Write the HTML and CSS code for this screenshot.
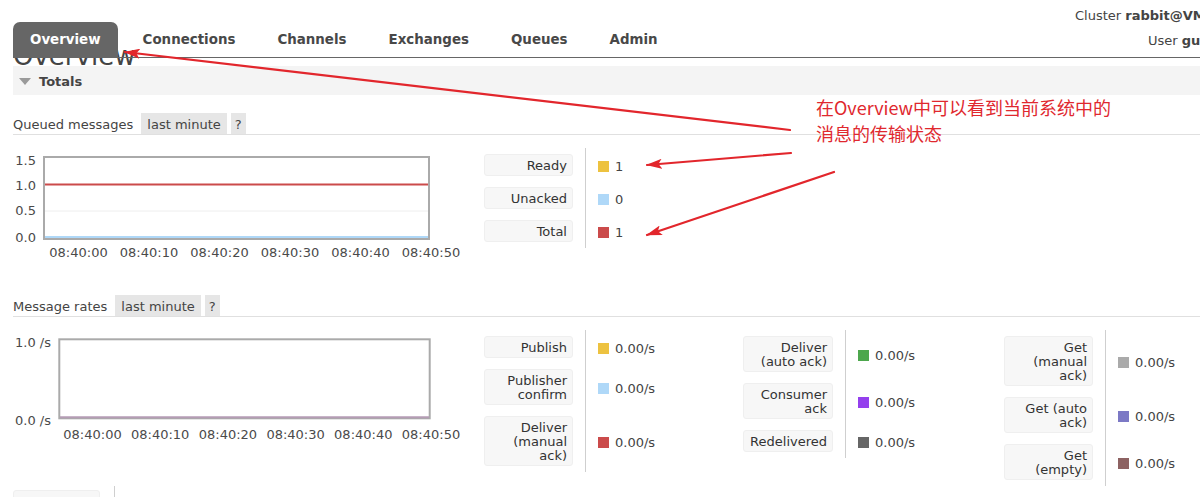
FILE: index.html
```html
<!DOCTYPE html>
<html lang="en">
<head>
<meta charset="utf-8">
<title>RabbitMQ Management - Overview</title>
<link rel="stylesheet" href="styles.css">
</head>
<body>
<header class="topbar">
  <ul class="tabs">
    <li class="tab tab-active">Overview</li>
    <li class="tab">Connections</li>
    <li class="tab">Channels</li>
    <li class="tab">Exchanges</li>
    <li class="tab">Queues</li>
    <li class="tab">Admin</li>
  </ul>
  <div class="login">
    <div class="login-line">Cluster <b>rabbit@VM_0_9_centos</b></div>
    <div class="login-line login-user">User <b>guest</b></div>
  </div>
</header>

<div class="title-clip"><h1 class="page-title">Overview</h1></div>

<div class="section-bar"><span class="caret"></span><span>Totals</span></div>

<main class="content">
  <div class="heading-row">
    <h3>Queued messages</h3>
    <span class="pill">last minute</span>
    <span class="pill pill-help">?</span>
  </div>

  <div class="chart-row">
    <svg class="chart" width="455" height="112" viewBox="0 0 455 112">
      <rect x="31" y="9" width="385" height="82" fill="#fff" stroke="#aaa" stroke-width="2"/>
      <line x1="32" y1="63" x2="415" y2="63" stroke="#eee" stroke-width="1"/>
      <line x1="32" y1="36.5" x2="415" y2="36.5" stroke="#cb4b4b" stroke-width="2"/>
      <line x1="32" y1="89" x2="415" y2="89" stroke="#afd8f8" stroke-width="2"/>
      <g class="axis-y" text-anchor="end">
        <text x="23" y="17.2">1.5</text>
        <text x="23" y="41.5">1.0</text>
        <text x="23" y="67.2">0.5</text>
        <text x="23" y="93.9">0.0</text>
      </g>
      <g class="axis-x" text-anchor="middle">
        <text x="65.5" y="108.9">08:40:00</text>
        <text x="136" y="108.9">08:40:10</text>
        <text x="206.5" y="108.9">08:40:20</text>
        <text x="277" y="108.9">08:40:30</text>
        <text x="347.5" y="108.9">08:40:40</text>
        <text x="418" y="108.9">08:40:50</text>
      </g>
    </svg>

    <div class="legend">
      <span class="divider"></span>
      <div class="label">Ready</div>
      <div class="value"><span class="swatch" style="background:#edc240"></span>1</div>
      <div class="label">Unacked</div>
      <div class="value"><span class="swatch" style="background:#afd8f8"></span>0</div>
      <div class="label">Total</div>
      <div class="value"><span class="swatch" style="background:#cb4b4b"></span>1</div>
    </div>
  </div>

  <div class="heading-row heading-rates">
    <h3>Message rates</h3>
    <span class="pill">last minute</span>
    <span class="pill pill-help">?</span>
  </div>

  <div class="chart-row">
    <svg class="chart" width="455" height="112" viewBox="0 0 455 112">
      <rect x="46.3" y="9.3" width="370.4" height="79" fill="#fff" stroke="#aaa" stroke-width="2"/>
      <line x1="47" y1="87.3" x2="416" y2="87.3" stroke="#b49cb4" stroke-width="2"/>
      <g class="axis-y">
        <text x="2" y="16.9">1.0 /s</text>
        <text x="2" y="95.2">0.0 /s</text>
      </g>
      <g class="axis-x" text-anchor="middle">
        <text x="79.5" y="108.5">08:40:00</text>
        <text x="147.2" y="108.5">08:40:10</text>
        <text x="214.9" y="108.5">08:40:20</text>
        <text x="282.6" y="108.5">08:40:30</text>
        <text x="350.3" y="108.5">08:40:40</text>
        <text x="418" y="108.5">08:40:50</text>
      </g>
    </svg>

    <div class="rates-legends">
      <div class="legend">
        <span class="divider"></span>
        <div class="label">Publish</div>
        <div class="value"><span class="swatch" style="background:#edc240"></span>0.00/s</div>
        <div class="label">Publisher<br>confirm</div>
        <div class="value"><span class="swatch" style="background:#afd8f8"></span>0.00/s</div>
        <div class="label">Deliver<br>(manual<br>ack)</div>
        <div class="value"><span class="swatch" style="background:#cb4b4b"></span>0.00/s</div>
      </div>
      <div class="legend legend-wide">
        <span class="divider"></span>
        <div class="label">Deliver<br>(auto ack)</div>
        <div class="value"><span class="swatch" style="background:#4da74d"></span>0.00/s</div>
        <div class="label">Consumer<br>ack</div>
        <div class="value"><span class="swatch" style="background:#9440ed"></span>0.00/s</div>
        <div class="label">Redelivered</div>
        <div class="value"><span class="swatch" style="background:#666666"></span>0.00/s</div>
      </div>
      <div class="legend">
        <span class="divider"></span>
        <div class="label">Get<br>(manual<br>ack)</div>
        <div class="value"><span class="swatch" style="background:#aaaaaa"></span>0.00/s</div>
        <div class="label">Get (auto<br>ack)</div>
        <div class="value"><span class="swatch" style="background:#7c79c5"></span>0.00/s</div>
        <div class="label">Get<br>(empty)</div>
        <div class="value"><span class="swatch" style="background:#8d6262"></span>0.00/s</div>
      </div>
    </div>
  </div>

  <div class="peek">
    <div class="peek-box"></div>
    <span class="peek-divider"></span>
  </div>
</main>

<div class="annotation">
  <svg class="arrows" width="1200" height="497" viewBox="0 0 1200 497">
    <defs>
      <marker id="head" markerUnits="userSpaceOnUse" markerWidth="16" markerHeight="10" viewBox="0 0 16 10" refX="15" refY="5" orient="auto">
        <path d="M0 0 L16 5 L0 10 L3.5 5 Z" fill="#e2262c"/>
      </marker>
    </defs>
    <g stroke="#e2262c" stroke-width="2.2" fill="none" stroke-linecap="round">
      <line x1="790" y1="130" x2="125" y2="52" marker-end="url(#head)"/>
      <line x1="791" y1="153" x2="647" y2="165" marker-end="url(#head)"/>
      <line x1="834" y1="172" x2="647" y2="235" marker-end="url(#head)"/>
    </g>
  </svg>
  <p class="note">在Overview中可以看到当前系统中的<br>消息的传输状态</p>
</div>
</body>
</html>
```

FILE: styles.css
```css
* {
  box-sizing: border-box;
}

html,
body {
  margin: 0;
  padding: 0;
}

body {
  position: relative;
  width: 1200px;
  height: 497px;
  overflow: hidden;
  background: #fff;
  color: #444;
  font-family: "DejaVu Sans", Verdana, sans-serif;
  font-size: 13px;
}

/* ---------- top bar ---------- */
.topbar {
  position: relative;
  z-index: 1;
  display: flex;
  align-items: flex-end;
  height: 58px;
  margin-left: 13px;
  border-bottom: 1px solid #666;
}

.tabs {
  display: flex;
  gap: 8px;
  margin: 0;
  padding: 0;
  list-style: none;
}

.tab {
  height: 35px;
  padding: 1px 17px 0;
  line-height: 34px;
  font-size: 13.4px;
  font-weight: bold;
  color: #484848;
  border-radius: 7px 7px 0 0;
}

.tab-active {
  background: #666;
  color: #fff;
}

.login {
  flex: none;
  align-self: flex-start;
  width: 125px;
  margin-left: auto;
  padding-top: 3px;
  line-height: 25px;
  white-space: nowrap;
  color: #444;
}

.login-user {
  padding-left: 73px;
}

/* ---------- page title (partly hidden under the bar) ---------- */
.title-clip {
  position: relative;
  z-index: 0;
  height: 16px;
  margin: -8px 0 0 13px;
  overflow: hidden;
}

.page-title {
  margin: -7.5px 0 0;
  font-size: 26px;
  line-height: 26px;
  font-weight: normal;
  color: #444;
}

/* ---------- Totals bar ---------- */
.section-bar {
  display: flex;
  align-items: center;
  gap: 8px;
  height: 29px;
  margin-left: 13px;
  padding: 2px 0 0 6px;
  background: #f4f4f4;
  font-weight: bold;
  color: #444;
}

.caret {
  width: 0;
  height: 0;
  border-left: 6.5px solid transparent;
  border-right: 6.5px solid transparent;
  border-top: 7px solid #9a9a9a;
}

/* ---------- content ---------- */
.content {
  margin-left: 13px;
}

.heading-row {
  display: flex;
  gap: 4px;
  height: 22px;
  margin-top: 18px;
  line-height: 23px;
  border-bottom: 1px solid #e0e0e0;
}

.heading-row h3 {
  margin: 0 4px 0 0;
  font-size: 13px;
  font-weight: normal;
}

.heading-rates {
  margin-top: 35px;
}

.pill {
  padding: 0 6px;
  background: #e6e6e6;
}

.pill-help {
  padding: 0 4px;
}

.chart-row {
  display: flex;
  align-items: flex-start;
  gap: 16px;
  margin-top: 13px;
}

.chart {
  display: block;
  flex: none;
  font-family: "DejaVu Sans", Verdana, sans-serif;
  font-size: 13px;
}

.chart text {
  fill: #4a4a4a;
}

/* ---------- legends ---------- */
.rates-legends {
  display: grid;
  grid-template-columns: 259px 261px auto;
}

.legend {
  display: grid;
  grid-template-columns: 89px 1px auto;
  grid-template-rows: repeat(3, auto);
  align-content: start;
  column-gap: 12px;
  row-gap: 11px;
  padding: 6px 0;
}

.legend-wide {
  grid-template-columns: 90px 1px auto;
}

.divider {
  grid-column: 2;
  grid-row: 1 / -1;
  margin: -6px 0;
  background: #cfcfcf;
}

.label {
  grid-column: 1;
  padding: 4px 5px 2px;
  line-height: 14px;
  text-align: right;
  white-space: nowrap;
  background: #f7f7f7;
  border: 1px solid #efefef;
  border-radius: 3px;
  color: #333;
}

.value {
  grid-column: 3;
  display: flex;
  align-items: center;
  gap: 6px;
  padding-top: 2px;
  white-space: nowrap;
  color: #444;
}

.swatch {
  flex: none;
  width: 11px;
  height: 11px;
}

.peek {
  display: flex;
  gap: 14px;
  height: 11px;
}

.peek-box {
  width: 87px;
  height: 20px;
  margin-top: 4px;
  background: #f7f7f7;
  border: 1px solid #efefef;
  border-radius: 3px;
}

.peek-divider {
  width: 1px;
  background: #cfcfcf;
}

/* ---------- annotation overlay ---------- */
.annotation {
  position: absolute;
  inset: 0;
  z-index: 2;
  pointer-events: none;
}

.arrows {
  position: absolute;
  left: 0;
  top: 0;
}

.note {
  position: absolute;
  left: 816px;
  top: 94px;
  margin: 0;
  font-family: "Noto Sans CJK SC", "Noto Sans", sans-serif;
  font-size: 18px;
  line-height: 26px;
  color: #e0282e;
  white-space: nowrap;
}
```
